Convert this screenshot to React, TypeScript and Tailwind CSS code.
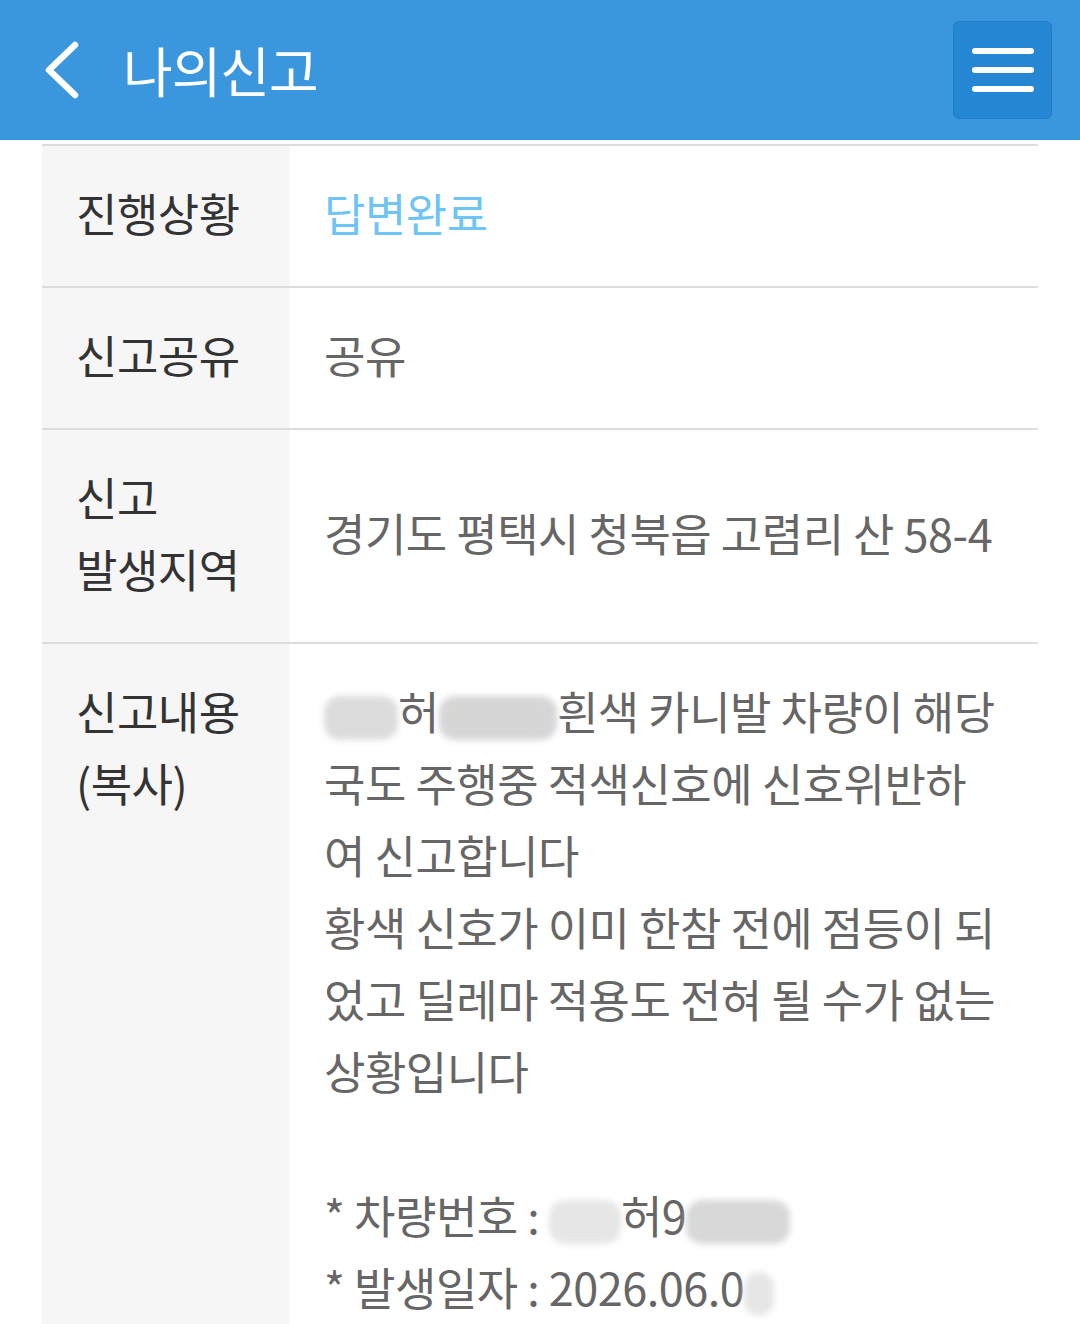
import React from "react";

const FONT = { fontFamily: '"Noto Sans CJK KR", "Noto Sans", sans-serif' };

function Blur({ w, className = "" }: { w: number; className?: string }) {
  return (
    <span
      className={"inline-block align-middle h-[44px] bg-[#d6d6d6] blur-[3px] rounded-[16px] " + className}
      style={{ width: w }}
    />
  );
}

function Row({
  label,
  children,
  center = true,
  last = false,
}: {
  label: React.ReactNode;
  children: React.ReactNode;
  center?: boolean;
  last?: boolean;
}) {
  return (
    <div className={"flex " + (last ? "flex-1" : "border-b-2 border-[#dddddd]")}>
      <div className="w-[248px] shrink-0 bg-[#f6f6f6] pl-[34px] pt-[31px] pb-[37px] text-[#333333] flex items-start">
        <div>{label}</div>
      </div>
      <div className={"flex-1 pl-[34px] pr-[20px] pt-[31px] pb-[37px] text-[#666666] flex " + (center ? "items-center" : "items-start")}>
        <div>{children}</div>
      </div>
    </div>
  );
}

export default function App() {
  return (
    <div className="w-[1080px] h-[1324px] overflow-hidden bg-white flex flex-col" style={FONT}>
      {/* Header */}
      <div className="h-[140px] shrink-0 bg-[#3a97de] flex items-center pl-[44px] pr-[28px]">
        <svg width="40" height="60" viewBox="0 0 40 60" className="shrink-0">
          <polyline points="31,5 5,30 31,55" fill="none" stroke="#fff" strokeWidth="6.5" strokeLinecap="round" strokeLinejoin="round" />
        </svg>
        <h1 className="ml-[39px] text-white text-[54px] leading-none tracking-[-1px] font-normal">나의신고</h1>
        <button className="ml-auto w-[99px] h-[98px] rounded-[6px] bg-[#2586d4] border border-[#1f7dca] flex flex-col items-center justify-center gap-[13px]">
          <span className="block w-[62px] h-[6px] rounded-full bg-white" />
          <span className="block w-[62px] h-[6px] rounded-full bg-white" />
          <span className="block w-[62px] h-[6px] rounded-full bg-white" />
        </button>
      </div>

      {/* Table */}
      <div className="mt-[4px] mx-[42px] flex-1 flex flex-col border-t-2 border-[#dddddd] text-[45px] leading-[72px] tracking-[-0.5px]">
        <Row label="진행상황">
          <span className="text-[#6ec4f4]">답변완료</span>
        </Row>
        <Row label="신고공유">공유</Row>
        <Row
          label={
            <>
              신고
              <br />
              발생지역
            </>
          }
        >
          경기도 평택시 청북읍 고렴리 산 58-4
        </Row>
        <Row
          last
          center={false}
          label={
            <>
              신고내용
              <br />
              (복사)
            </>
          }
        >
          <div className="whitespace-nowrap">
            <Blur w={74} className="bg-[#dcdcdc]" />
            <span>허</span>
            <Blur w={118} className="bg-[#cfcfcf]" />
            <span>흰색 카니발 차량이 해당</span>
          </div>
          <div>국도 주행중 적색신호에 신호위반하</div>
          <div>여 신고합니다</div>
          <div>황색 신호가 이미 한참 전에 점등이 되</div>
          <div>었고 딜레마 적용도 전혀 될 수가 없는</div>
          <div>상황입니다</div>
          <div>&nbsp;</div>
          <div className="whitespace-nowrap">
            * 차량번호 : <Blur w={72} className="bg-[#e6e6e6]" />
            <span>허9</span>
            <Blur w={104} className="bg-[#d8d8d8]" />
          </div>
          <div className="whitespace-nowrap">
            * 발생일자 : 2026.06.0
            <Blur w={30} className="bg-[#e6e6e6]" />
          </div>
        </Row>
      </div>
    </div>
  );
}
